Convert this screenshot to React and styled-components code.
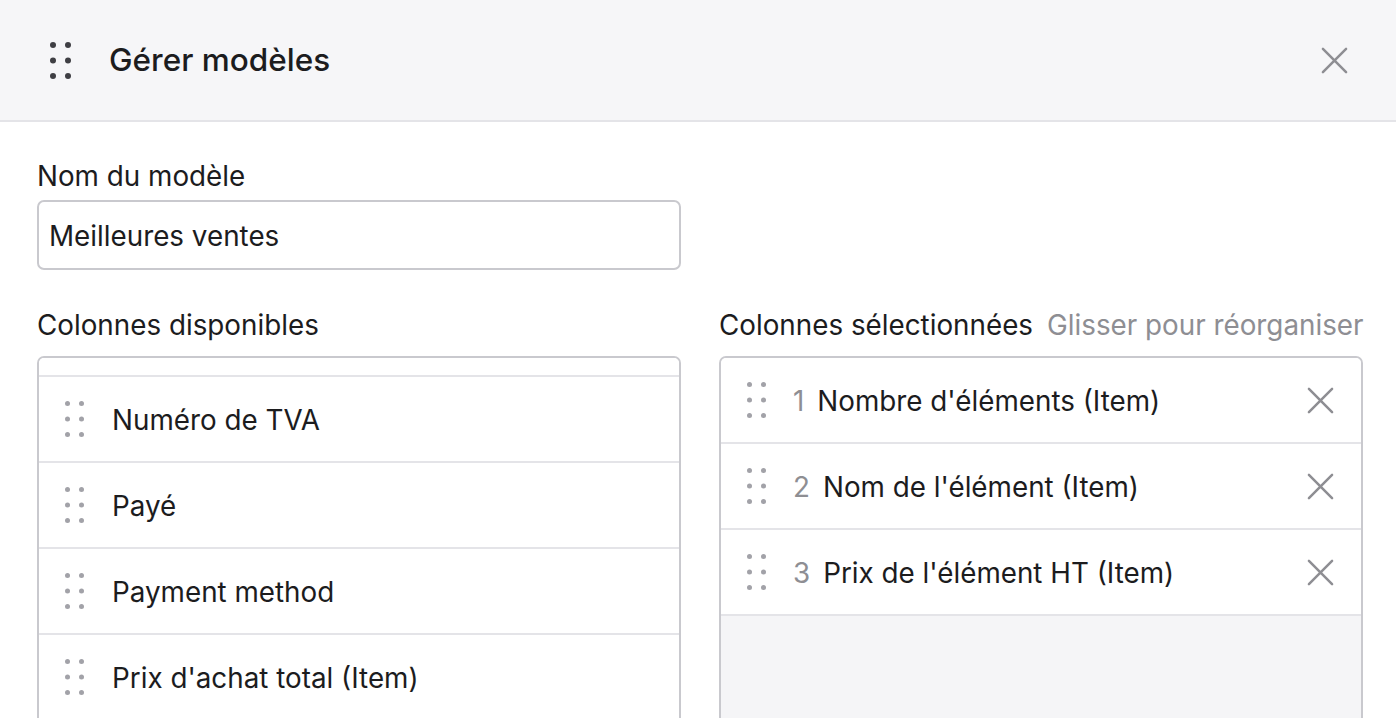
import React from "react";
import styled, { createGlobalStyle } from "styled-components";

const Global = createGlobalStyle`
  html, body { margin: 0; padding: 0; background: #ffffff; }
  body { font-family: Inter, "Noto Sans", sans-serif; color: #1c1c1e; overflow: hidden; }
  * { box-sizing: border-box; }
`;

const Dialog = styled.div`
  width: 1396px;
  height: 718px;
  display: flex;
  flex-direction: column;
  background: #fff;
  overflow: hidden;
`;

const Header = styled.header`
  height: 122px;
  flex: none;
  display: flex;
  align-items: center;
  padding: 0 48px 0 50px;
  background: #f6f6f8;
  border-bottom: 2px solid #e4e4e8;
`;

const Title = styled.h1`
  margin: 0 0 2px 38px;
  flex: 1;
  font-size: 31.5px;
  font-weight: 500;
  color: #1c1c1e;
`;

const CloseButton = styled.button`
  border: none;
  background: none;
  padding: 0;
  display: flex;
  color: #8e8e93;
`;

const Body = styled.div`
  flex: 1;
  padding: 38px 33px 0 37px;
  display: flex;
  flex-direction: column;
`;

const Label = styled.div`
  font-size: 27.8px;
  line-height: 32px;
  color: #1c1c1e;
  white-space: nowrap;
`;

const Hint = styled.span`
  color: #8e8e93;
  margin-left: 14px;
`;

const Input = styled.div`
  margin-top: 8px;
  width: 644px;
  height: 70px;
  border: 2px solid #c9c9ce;
  border-radius: 7px;
  display: flex;
  align-items: center;
  padding: 2px 10px 0;
  font-size: 27.8px;
`;

const Columns = styled.div`
  margin-top: 39px;
  display: grid;
  grid-template-columns: 644px 644px;
  column-gap: 38px;
  flex: 1;
  min-height: 0;
`;

const Column = styled.div`
  display: flex;
  flex-direction: column;
  min-height: 0;
`;

const ListBox = styled.div`
  margin-top: 15px;
  flex: 1;
  border: 2px solid #c9c9ce;
  border-bottom: none;
  border-radius: 7px 7px 0 0;
  overflow: hidden;
  background: ${(p) => (p.$filler ? "#f5f5f7" : "#fff")};
`;

const Spacer = styled.div`
  height: 19px;
  border-bottom: 2px solid #e4e4e8;
  background: #fff;
`;

const Row = styled.div`
  height: 86px;
  display: flex;
  align-items: center;
  padding: ${(p) => (p.$selected ? "0 27px 0 26px" : "0 0 0 26px")};
  border-bottom: 2px solid #e4e4e8;
  background: #fff;
  font-size: 27.8px;
`;

const Num = styled.span`
  color: #8e8e93;
  margin-left: 27px;
  padding-top: 2px;
`;

const RowText = styled.span`
  flex: 1;
  padding-top: 2px;
  margin-left: ${(p) => (p.$selected ? "13px" : "28px")};
  white-space: nowrap;
`;

const Dots = ({ size = 5, gap = 9, vgap = 10.5, color }) => {
  const w = size * 2 + gap;
  const h = size * 3 + vgap * 2;
  const cs = [];
  for (let r = 0; r < 3; r++)
    for (let c = 0; c < 2; c++)
      cs.push(
        <circle key={`${r}${c}`} cx={size / 2 + c * (size + gap)} cy={size / 2 + r * (size + vgap)} r={size / 2} fill={color} />
      );
  return (
    <svg width={w} height={h} viewBox={`0 0 ${w} ${h}`}>
      {cs}
    </svg>
  );
};

const XIcon = ({ size, stroke = 3 }) => (
  <svg width={size} height={size} viewBox="0 0 28 28" fill="none" stroke="currentColor" strokeWidth={stroke} strokeLinecap="round">
    <path d="M2 2 L26 26 M26 2 L2 26" />
  </svg>
);

const RemoveBtn = styled.span`
  display: flex;
  color: #8e8e93;
`;

const available = ["Numéro de TVA", "Payé", "Payment method", "Prix d'achat total (Item)"];
const selected = ["Nombre d'éléments (Item)", "Nom de l'élément (Item)", "Prix de l'élément HT (Item)"];

export default function App() {
  return (
    <>
      <Global />
      <Dialog>
        <Header>
          <Dots size={6} gap={9} vgap={9.5} color="#3f3f44" />
          <Title>Gérer modèles</Title>
          <CloseButton>
            <XIcon size={27} stroke={2.6} />
          </CloseButton>
        </Header>
        <Body>
          <Label>Nom du modèle</Label>
          <Input>Meilleures ventes</Input>
          <Columns>
            <Column>
              <Label>Colonnes disponibles</Label>
              <ListBox>
                <Spacer />
                {available.map((t) => (
                  <Row key={t}>
                    <Dots color="#a2a2a8" />
                    <RowText>{t}</RowText>
                  </Row>
                ))}
              </ListBox>
            </Column>
            <Column>
              <Label>
                Colonnes sélectionnées<Hint>Glisser pour réorganiser</Hint>
              </Label>
              <ListBox $filler>
                {selected.map((t, i) => (
                  <Row key={t} $selected>
                    <Dots color="#a2a2a8" />
                    <Num>{i + 1}</Num>
                    <RowText $selected>{t}</RowText>
                    <RemoveBtn>
                      <XIcon size={27} stroke={2.6} />
                    </RemoveBtn>
                  </Row>
                ))}
              </ListBox>
            </Column>
          </Columns>
        </Body>
      </Dialog>
    </>
  );
}
